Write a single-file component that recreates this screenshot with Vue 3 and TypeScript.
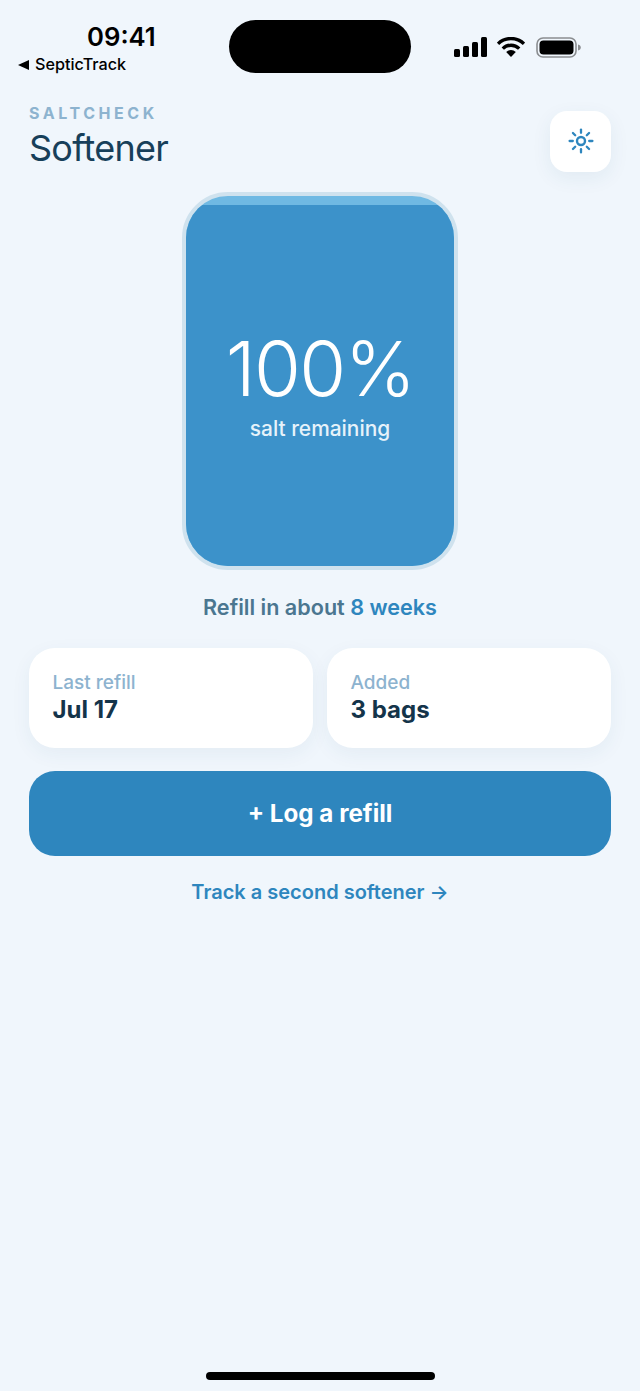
<script setup lang="ts">
const rays = [0, 45, 90, 135, 180, 225, 270, 315]

const stats = [
  { label: 'Last refill', value: 'Jul 17' },
  { label: 'Added', value: '3 bags' },
]
</script>

<template>
  <div class="page">
    <div class="island"></div>

    <div class="status">
      <div class="status-left">
        <div class="time">09:41</div>
        <div class="back"><span class="tri"></span>SepticTrack</div>
      </div>
      <div class="status-right">
        <svg width="33" height="20" viewBox="0 0 33 20">
          <rect x="0" y="12" width="6" height="8" rx="1.5" fill="#000" />
          <rect x="9" y="9" width="6" height="11" rx="1.5" fill="#000" />
          <rect x="18" y="5" width="6" height="15" rx="1.5" fill="#000" />
          <rect x="27" y="0" width="6" height="20" rx="1.5" fill="#000" />
        </svg>
        <svg width="28" height="20" viewBox="0 0 28 20">
          <path d="M1 6.8a18.6 18.6 0 0 1 26 0" fill="none" stroke="#000" stroke-width="3.4" />
          <path d="M5.8 11.6a11.8 11.8 0 0 1 16.4 0" fill="none" stroke="#000" stroke-width="3.4" />
          <path d="M14 20l-4.8-5a6.8 6.8 0 0 1 9.6 0z" fill="#000" />
        </svg>
        <svg class="battery" width="45" height="21" viewBox="0 0 45 21">
          <rect x="1" y="1" width="39" height="19" rx="6" fill="none" stroke="#8a8d90" stroke-width="1.6" />
          <rect x="3.5" y="3.5" width="34" height="14" rx="4" fill="#000" />
          <path d="M42 7.5c1.8.4 2.8 1.5 2.8 3s-1 2.6-2.8 3z" fill="#8a8d90" />
        </svg>
      </div>
    </div>

    <header class="header">
      <div>
        <div class="eyebrow">SALTCHECK</div>
        <h1 class="title">Softener</h1>
      </div>
      <button class="sun-btn" type="button" aria-label="Theme">
        <svg width="26" height="26" viewBox="0 0 26 26">
          <circle cx="13" cy="13" r="4" fill="none" stroke="#2e86be" stroke-width="2.4" />
          <line
            v-for="r in rays"
            :key="r"
            x1="13"
            y1="4.8"
            x2="13"
            y2="1.6"
            stroke="#2e86be"
            stroke-width="2.3"
            stroke-linecap="round"
            :transform="`rotate(${r} 13 13)`"
          />
        </svg>
      </button>
    </header>

    <div class="tank">
      <div class="tank-fill">
        <div class="percent">100%</div>
        <div class="remaining">salt remaining</div>
      </div>
    </div>

    <p class="estimate">Refill in about <span>8 weeks</span></p>

    <div class="stats">
      <div v-for="s in stats" :key="s.label" class="card">
        <div class="card-label">{{ s.label }}</div>
        <div class="card-value">{{ s.value }}</div>
      </div>
    </div>

    <button class="log-btn" type="button">+ Log a refill</button>
    <a class="second">Track a second softener →</a>

    <div class="home-bar"></div>
  </div>
</template>

<style scoped>
.page {
  position: relative;
  box-sizing: border-box;
  height: 1391px;
  padding: 0 29px;
  display: flex;
  flex-direction: column;
  background: #f0f6fc;
  font-family: Inter, "Noto Sans", sans-serif;
  overflow: hidden;
}

.island {
  position: absolute;
  left: 229px;
  top: 20px;
  width: 182px;
  height: 53px;
  border-radius: 27px;
  background: #000;
}

.status {
  display: flex;
  justify-content: space-between;
  height: 96px;
  margin: 0 -29px;
  padding: 21px 59px 0 18px;
  box-sizing: border-box;
}

.status-left {
  display: flex;
  flex-direction: column;
}

.time {
  margin-left: 69px;
  font-size: 25.7px;
  line-height: 31px;
  font-weight: 600;
  color: #000;
}

.back {
  display: flex;
  align-items: center;
  margin-top: 3px;
  font-size: 16.2px;
  line-height: 19px;
  font-weight: 500;
  color: #000;
}

.tri {
  width: 0;
  height: 0;
  margin-right: 6px;
  border-top: 5px solid transparent;
  border-bottom: 5px solid transparent;
  border-right: 11px solid #000;
}

.status-right {
  display: flex;
  align-items: center;
  gap: 10px;
  height: 20px;
  margin-top: 16px;
}

.battery {
  margin-left: 1px;
}

.header {
  display: flex;
  justify-content: space-between;
  align-items: flex-start;
  height: 96px;
}

.eyebrow {
  font-size: 16px;
  line-height: 20px;
  font-weight: 700;
  letter-spacing: 3.55px;
  color: #8db3cf;
  margin-top: 7px;
}

.title {
  margin: 4px 0 0;
  font-size: 36px;
  line-height: 42px;
  font-weight: 400;
  letter-spacing: -0.75px;
  color: #173f5a;
}

.sun-btn {
  width: 61px;
  height: 61px;
  margin-top: 14.5px;
  padding: 0;
  border: none;
  border-radius: 17px;
  background: #fff;
  display: flex;
  align-items: center;
  justify-content: center;
  box-shadow: 0 6px 20px rgba(30, 80, 120, 0.07);
}

.tank {
  box-sizing: border-box;
  align-self: center;
  width: 276px;
  height: 378px;
  border: 4px solid #cfe2ee;
  border-radius: 46px;
  background: #6fb9e3;
  overflow: hidden;
  padding-top: 9px;
}

.tank-fill {
  height: 100%;
  background: #3c92ca;
  color: #fff;
  display: flex;
  flex-direction: column;
  align-items: center;
  padding-top: 121px;
  box-sizing: border-box;
}

.percent {
  font-size: 76px;
  line-height: 84px;
  font-weight: 350;
  letter-spacing: -1.6px;
}

.remaining {
  margin-top: 6px;
  font-size: 20.9px;
  line-height: 26px;
  font-weight: 500;
  color: #e6f2fa;
}

.estimate {
  margin: 23px 0 0;
  text-align: center;
  font-size: 21.6px;
  line-height: 28px;
  font-weight: 600;
  color: #4b7690;
}

.estimate span {
  color: #2e86be;
}

.stats {
  display: grid;
  grid-template-columns: 1fr 1fr;
  gap: 14px;
  margin-top: 27px;
}

.card {
  box-sizing: border-box;
  height: 100px;
  padding: 23px 23.5px 0;
  border-radius: 26px;
  background: #fff;
  box-shadow: 0 6px 20px rgba(30, 80, 120, 0.06);
}

.card-label {
  font-size: 19px;
  line-height: 23px;
  font-weight: 500;
  color: #8db3cf;
}

.card-value {
  margin-top: 1px;
  font-size: 24px;
  line-height: 30px;
  font-weight: 700;
  color: #14344a;
}

.log-btn {
  height: 85px;
  margin-top: 23px;
  border: none;
  border-radius: 26px;
  background: #2e86be;
  color: #fff;
  font-family: inherit;
  font-size: 24.2px;
  font-weight: 700;
}

.second {
  margin-top: 23px;
  text-align: center;
  font-size: 20px;
  line-height: 27px;
  font-weight: 600;
  color: #2e86be;
}

.home-bar {
  position: absolute;
  left: 206px;
  bottom: 11px;
  width: 229px;
  height: 8px;
  border-radius: 4px;
  background: #000;
}
</style>
